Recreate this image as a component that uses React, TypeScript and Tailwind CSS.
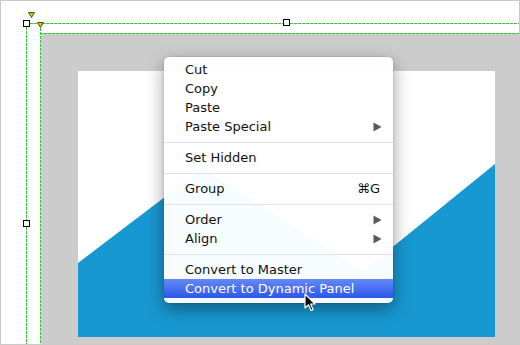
import React from 'react'

type Item =
  | { kind: 'item'; label: string; shortcut?: string; submenu?: boolean; active?: boolean }
  | { kind: 'sep' }

const items: Item[] = [
  { kind: 'item', label: 'Cut' },
  { kind: 'item', label: 'Copy' },
  { kind: 'item', label: 'Paste' },
  { kind: 'item', label: 'Paste Special', submenu: true },
  { kind: 'sep' },
  { kind: 'item', label: 'Set Hidden' },
  { kind: 'sep' },
  { kind: 'item', label: 'Group', shortcut: '⌘G' },
  { kind: 'sep' },
  { kind: 'item', label: 'Order', submenu: true },
  { kind: 'item', label: 'Align', submenu: true },
  { kind: 'sep' },
  { kind: 'item', label: 'Convert to Master' },
  { kind: 'item', label: 'Convert to Dynamic Panel', active: true },
]

function SubmenuArrow() {
  return (
    <svg width="9" height="10" viewBox="0 0 9 10" className="shrink-0">
      <polygon points="0.5,0.5 8.5,5 0.5,9.5" fill="#5a5a5a" />
    </svg>
  )
}

function Guides() {
  const green = '#35c935'
  return (
    <svg
      width="520"
      height="345"
      className="absolute -left-px -top-px pointer-events-none"
    >
      <g stroke={green} strokeWidth="1" strokeDasharray="3 1" fill="none" shapeRendering="crispEdges">
        <line x1="26.5" y1="23" x2="26.5" y2="344" />
        <line x1="40.5" y1="24" x2="40.5" y2="344" />
        <line x1="26" y1="23.5" x2="519" y2="23.5" />
        <line x1="40" y1="33.5" x2="519" y2="33.5" />
      </g>
      {/* selection handles */}
      <g fill="#fff" stroke="#000" strokeWidth="1">
        <rect x="23.5" y="20.5" width="6" height="6" />
        <rect x="283.5" y="19.5" width="6" height="6" />
        <rect x="23.5" y="220.5" width="6" height="6" />
      </g>
      {/* anchor markers */}
      <g fill="#d9c800" stroke="#4a4a2a" strokeWidth="1">
        <polygon points="28.5,12.5 34.5,12.5 31.5,17.5" />
        <polygon points="37.5,22.5 43.5,22.5 40.5,27.5" />
      </g>
    </svg>
  )
}

function Cursor() {
  return (
    <svg
      width="14"
      height="20"
      viewBox="0 0 14 20"
      className="absolute left-[303px] top-[292px] pointer-events-none"
    >
      <path
        d="M1 1 L1 15 L4.5 11.8 L7 17.5 L9 16.6 L6.6 11 L11 11 Z"
        fill="#000"
        stroke="#fff"
        strokeWidth="1.2"
        strokeLinejoin="round"
      />
    </svg>
  )
}

export default function App() {
  return (
    <div className="relative w-[520px] h-[345px] overflow-hidden border border-[#c9c9c9] bg-white flex flex-col">
      <div className="flex-1 ml-[40px] mt-[33px] bg-[#cccccc] pl-[37px] pt-[37px]">
        {/* image placeholder: sun + mountains */}
        <div className="relative w-[417px] h-[266px] bg-white overflow-hidden">
          <svg width="417" height="266" className="absolute inset-0">
            <circle cx="268" cy="62" r="46" fill="#e8e8e8" />
            <polygon
              points="0,192 125,97 285,200 417,93 417,266 0,266"
              fill="#1898d1"
            />
          </svg>
        </div>
      </div>

      <Guides />

      <div
        className="absolute left-[163px] top-[56px] w-[229px] rounded-[5px] bg-[rgba(255,255,255,0.97)] pt-[3px] pb-[5px] shadow-[0_6px_18px_rgba(0,0,0,0.4),0_0_0_1px_rgba(0,0,0,0.06)] text-[13px] leading-[19px] text-[#111]"
        style={{ fontFamily: '"DejaVu Sans", "Liberation Sans", sans-serif' }}
      >
        {items.map((it, i) =>
          it.kind === 'sep' ? (
            <div key={i} className="pt-[6px] pb-[5px]">
              <div className="h-px bg-[#e2e2e2]" />
            </div>
          ) : (
            <div
              key={i}
              className={
                it.active
                  ? 'flex items-center justify-between h-[19px] pl-[21px] pr-[11px] text-white bg-gradient-to-b from-[#6688f6] to-[#2b56ec]'
                  : 'flex items-center justify-between h-[19px] pl-[21px] pr-[11px]'
              }
            >
              <span>{it.label}</span>
              {it.submenu && <SubmenuArrow />}
              {it.shortcut && <span className="pr-[2px]">{it.shortcut}</span>}
            </div>
          )
        )}
      </div>

      <Cursor />
    </div>
  )
}
